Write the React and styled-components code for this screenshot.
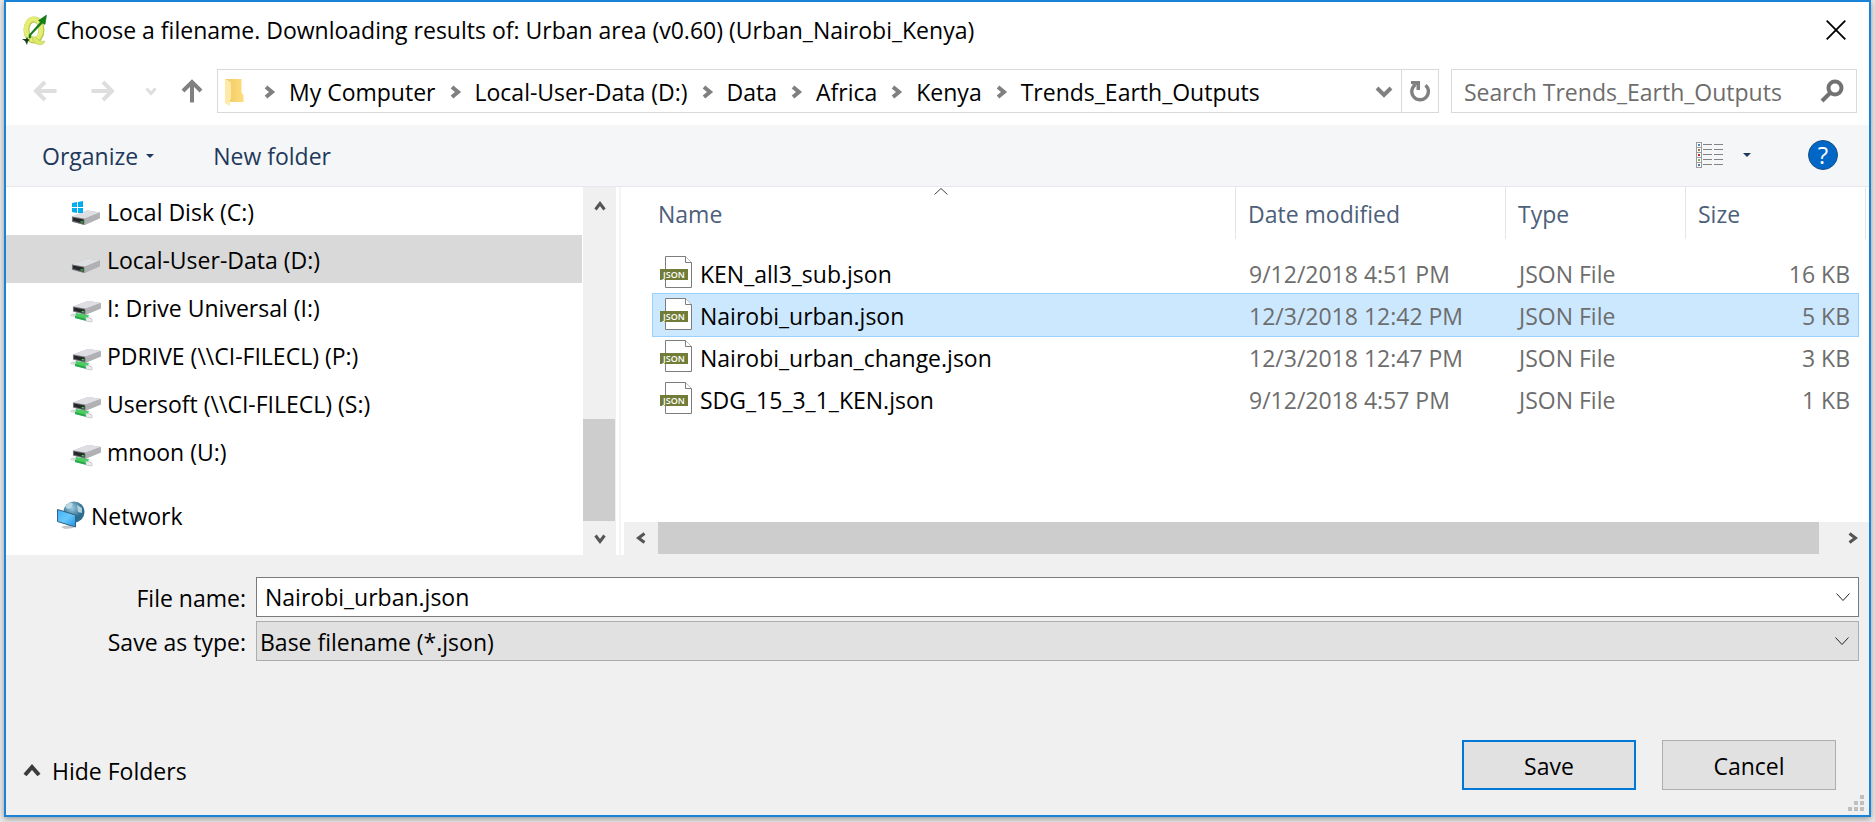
import React from 'react';
import styled, { createGlobalStyle, css } from 'styled-components';

const GlobalStyle = createGlobalStyle`
  *, *::before, *::after { box-sizing: border-box; }
  body {
    margin: 0;
    background: #e9e9e9;
    color: #000;
    font-family: "Open Sans", "Noto Sans", sans-serif;
    font-size: 23px;
    line-height: 32px;
  }
  button, input, select { font: inherit; color: inherit; }
  svg { display: block; flex: none; }
`;

const Dialog = styled.main`
  display: flex;
  flex-direction: column;
  min-width: 1200px;
  min-height: calc(100vh - 5px);
  margin: 0 4px 5px;
  border: 2px solid #1883d7;
  background: #fff;
  box-shadow: 0 2px 6px rgba(0, 0, 0, 0.35);
`;

const PlainButton = styled.button`
  display: flex;
  align-items: center;
  justify-content: center;
  padding: 0;
  border: 0;
  background: none;
  white-space: nowrap;
`;

const TitleBar = styled.header`
  display: flex;
  align-items: center;
  gap: 8px;
  height: 59px;
  padding: 0 23px 3px 15px;
`;

const Title = styled.h1`
  flex: 1;
  margin: 0;
  font-size: inherit;
  font-weight: 400;
  white-space: nowrap;
`;

const NavRow = styled.nav`
  display: flex;
  align-items: center;
  padding: 8px 12px 12px 27px;
`;

const HistoryButtons = styled.div`
  display: flex;
  gap: 23px;
  margin-right: 13px;
`;

const TravelButtons = styled.div`
  display: flex;
  gap: 34px;
  padding-right: 7px;
`;

const AddressBar = styled.div`
  display: flex;
  flex: 1;
  align-items: stretch;
  height: 44px;
  margin-right: 12px;
  border: 1px solid #d9d9d9;
`;

const Crumbs = styled.ol`
  display: flex;
  flex: 1;
  align-items: center;
  margin: 0;
  padding: 1px 0 0 7px;
  list-style: none;
`;

const Crumb = styled.li`
  display: flex;
  align-items: center;
  white-space: nowrap;

  svg { margin: 0 15px 0 14px; }
  &:first-of-type svg { margin-left: 20px; }
`;

const AddressButton = styled(PlainButton)`
  width: ${(p) => p.$width};
  border-left: ${(p) => (p.$divided ? '1px solid #d9d9d9' : '0')};
`;

const SearchBox = styled.label`
  display: flex;
  align-items: center;
  width: 406px;
  height: 44px;
  padding: 0 12px;
  border: 1px solid #d9d9d9;
`;

const SearchInput = styled.input`
  flex: 1;
  min-width: 0;
  padding: 2px 0 0;
  border: 0;
  outline: 0;
  background: none;

  &::placeholder { color: #6d6d6d; opacity: 1; }
`;

const Toolbar = styled.div`
  display: flex;
  align-items: center;
  height: 62px;
  padding: 0 31px 0 36px;
  border-bottom: 1px solid #e5e7ea;
  background: #f5f6f7;
  color: #1e395b;
`;

const ToolButton = styled(PlainButton)`
  gap: ${(p) => p.$gap || '10px'};
  margin-right: ${(p) => p.$after || '0'};
`;

const ToolbarEnd = styled.div`
  display: flex;
  align-items: center;
  gap: 57px;
  margin-left: auto;
  padding-bottom: 2px;
`;

const HelpButton = styled(PlainButton)`
  width: 30px;
  height: 30px;
  border: 1px solid #1b4f86;
  border-radius: 50%;
  background: #0067c6;
  color: #fff;
  font-size: 24px;
`;

const Browser = styled.section`
  display: flex;
  height: 368px;
`;

const Tree = styled.ul`
  width: 576px;
  margin: 0 1px 0 0;
  padding: 0;
  list-style: none;
`;

const TreeItem = styled.li`
  display: flex;
  align-items: center;
  gap: ${(p) => (p.$root ? '6px' : '4px')};
  height: 48px;
  margin-top: ${(p) => (p.$root ? '16px' : '0')};
  padding: 1px 0 0 ${(p) => (p.$root ? '51px' : '63px')};
  background: ${(p) => (p.$selected ? '#d9d9d9' : 'none')};
  white-space: nowrap;
`;

const VScroll = styled.div`
  display: flex;
  flex-direction: column;
  align-items: flex-start;
  width: 33px;
  background: #f0f0f0;
`;

const VTrack = styled.div`
  display: flex;
  flex: 1;
  align-items: flex-end;
  width: 32px;
`;

const VThumb = styled.div`
  width: 100%;
  height: 102px;
  background: #cdcdcd;
`;

const ScrollButton = styled(PlainButton)`
  width: ${(p) => (p.$vertical ? '33px' : '34px')};
  height: ${(p) => (p.$vertical ? '34px' : '32px')};
  padding-top: ${(p) => (p.$up ? '4px' : '0')};
  flex: none;
`;

const Splitter = styled.div`
  width: 2px;
  margin: 0 3px;
  background: #f5f5f5;
`;

const FilePane = styled.div`
  display: flex;
  flex: 1;
  flex-direction: column;
  min-width: 0;
  background: #fff;
`;

const TableArea = styled.div`
  flex: 1;
  padding: 0 3px 0 28px;
`;

const FileTable = styled.table`
  width: 100%;
  border-spacing: 0;
  table-layout: fixed;

  tbody::before {
    content: '';
    display: table-row;
    height: 13px;
  }
`;

const HeadCell = styled.th`
  position: relative;
  height: 52px;
  padding: 2px 0 0 ${(p) => (p.$first ? '6px' : '12px')};
  border-right: 1px solid #e5e5e5;
  color: #4c607a;
  font-weight: 400;
  text-align: left;
`;

const SortMark = styled.span`
  position: absolute;
  top: 1px;
  left: calc(50% - 10px);
`;

const Cell = styled.td`
  height: 42px;
  padding: 1px 0 0 13px;
  color: #6d6d6d;
  text-align: ${(p) => p.$align || 'left'};
  white-space: nowrap;

  &:first-child { padding-left: 8px; color: #000; }
  &:nth-child(4) { padding-right: 9px; }
`;

const FileRow = styled.tr`
  ${(p) => p.$selected && css`
    ${Cell}:not(:last-child) {
      background: #cce8ff;
      box-shadow: 0 -1px #99d1ff, 0 1px #99d1ff;
    }
    ${Cell}:first-child {
      box-shadow: 0 -1px #99d1ff, 0 1px #99d1ff, inset 1px 0 #99d1ff;
    }
    ${Cell}:nth-child(4) {
      box-shadow: 0 -1px #99d1ff, 0 1px #99d1ff, inset -1px 0 #99d1ff;
    }
  `}
`;

const FileName = styled.span`
  display: flex;
  align-items: center;
  gap: 8px;

  svg { margin-bottom: 4px; }
`;

const HScroll = styled.div`
  display: flex;
  height: 33px;
  background: #f0f0f0;
`;

const HTrack = styled.div`
  flex: 1;
  padding-right: 16px;
`;

const HThumb = styled.div`
  height: 32px;
  background: #cdcdcd;
`;

const Footer = styled.form`
  display: flex;
  flex: 1;
  flex-direction: column;
  background: #f0f0f0;
`;

const Fields = styled.div`
  display: grid;
  grid-template-columns: 240px 1fr;
  gap: 4px 10px;
  padding: 22px 10px 0 0;
`;

const FieldLabel = styled.label`
  padding-top: 5px;
  text-align: right;
`;

const Combo = styled.div`
  display: flex;
  position: relative;
  height: 40px;
  border: 1px solid ${(p) => (p.$filled ? '#adadad' : '#7a7a7a')};
  background: ${(p) => (p.$filled ? '#e1e1e1' : '#fff')};
`;

const NameInput = styled.input`
  flex: 1;
  min-width: 0;
  padding: 0 0 0 8px;
  border: 0;
  outline: 0;
  background: none;
`;

const TypeSelect = styled.select`
  flex: 1;
  padding: 2px 0 0 3px;
  border: 0;
  outline: 0;
  background: none;
  appearance: none;
`;

const ComboButton = styled(PlainButton)`
  width: 31px;
`;

const ComboMark = styled.span`
  position: absolute;
  top: 15px;
  right: 9px;
  pointer-events: none;
`;

const Actions = styled.div`
  display: flex;
  align-items: center;
  gap: 26px;
  margin-top: auto;
  padding: 0 33px 25px 17px;
`;

const HideButton = styled(PlainButton)`
  gap: 11px;
  margin-right: auto;
  padding-top: 12px;
`;

const PushButton = styled.button`
  width: 174px;
  height: 50px;
  padding: 2px 0 0;
  border: ${(p) => (p.$primary ? '2px solid #0078d7' : '1px solid #adadad')};
  background: #e1e1e1;
`;

const Grip = styled.span`
  position: absolute;
  right: 11px;
  bottom: 6px;
`;

const Frame = styled.div`
  position: relative;
`;

function Chevron({ dir = 'down', w = 18, h = 11, weight = 4, color = '#808080' }) {
  const i = weight / 2;
  const points = {
    down: `${i},${i} ${w / 2},${h - i} ${w - i},${i}`,
    up: `${i},${h - i} ${w / 2},${i} ${w - i},${h - i}`,
    right: `${i},${i} ${w - i},${h / 2} ${i},${h - i}`,
    left: `${w - i},${i} ${i},${h / 2} ${w - i},${h - i}`,
  };
  return (
    <svg width={w} height={h} viewBox={`0 0 ${w} ${h}`} overflow="visible">
      <polyline points={points[dir]} fill="none" stroke={color} strokeWidth={weight} />
    </svg>
  );
}

const Arrow = ({ turn = 0, color }) => (
  <svg width="24" height="24" viewBox="0 0 24 24">
    <path d="M23.500 12H3M12 3L3 12L12 21" transform={`rotate(${turn} 12 12)`} fill="none" stroke={color} strokeWidth="4" />
  </svg>
);

const Triangle = () => (
  <svg width="8" height="4" viewBox="0 0 8 4"><path d="M0 0H8L4 4Z" fill="#1e395b" /></svg>
);

const QgisLogo = () => (
  <svg width="27" height="32" viewBox="0 0 27 32">
    <ellipse cx="13" cy="16" rx="7.500" ry="10.500" fill="none" stroke="#b9c654" strokeWidth="6" />
    <ellipse cx="12.500" cy="15.500" rx="7.500" ry="10.500" fill="none" stroke="#e3ee72" strokeWidth="4.500" />
    <path d="M11 23C16 21 17 29 24 27C22 33 15 31 12 27Z" fill="#dce868" stroke="#b9c654" strokeWidth=".6" />
    <path d="M8 21L19.500 8L17.500 6.500L25.500 1L24 10.500L21.500 9L10 21L9.500 24H8Z" fill="#128312" stroke="#0a5d10" strokeWidth=".5" />
    <path d="M1 25L5 25L6 23L7 25L9 26L7 27L6 31L4 27Z" fill="#153d19" />
  </svg>
);

const FolderIcon = () => (
  <svg width="19" height="28" viewBox="0 0 19 28">
    <defs>
      <linearGradient id="folder" x1="0" x2="1"><stop stopColor="#efca63" /><stop offset="1" stopColor="#ffdc7c" /></linearGradient>
    </defs>
    <path d="M0 1H16.500V15L18.500 17V24H5V4Z" fill="url(#folder)" />
    <path d="M0 1L6 5V21L5 22V28L0 25Z" fill="#ffe9a6" />
  </svg>
);

const RefreshIcon = () => (
  <svg width="20" height="23" viewBox="0 0 20 23">
    <path d="M15.500 5.200A8.300 8.300 0 1 1 5.500 4.600" fill="none" stroke="#808080" strokeWidth="3.400" />
    <path d="M1 1H10V10H6.500V5L1 4Z" fill="#808080" />
  </svg>
);

const SearchIcon = () => (
  <svg width="24" height="24" viewBox="0 0 24 24">
    <circle cx="15" cy="9" r="6.500" fill="none" stroke="#727272" strokeWidth="4" />
    <path d="M10.500 13.500L2 22" stroke="#727272" strokeWidth="4" />
  </svg>
);

const CloseIcon = () => (
  <svg width="20" height="20" viewBox="0 0 20 20"><path d="M.7 .7L19.300 19.300M19.300 .7L.7 19.300" stroke="#000" strokeWidth="1.800" /></svg>
);

const ViewIcon = () => (
  <svg width="27" height="26" viewBox="0 0 27 26" shapeRendering="crispEdges">
    {['#4a7fb5', '#a06d4b', '#c8281e', '#77a94e', '#3f78b5'].map((fill, i) => (
      <g key={i} transform={`translate(0 ${i * 5})`}>
        <rect x=".5" y=".5" width="5" height="5" fill="#fff" stroke="#9a9a9a" />
        <rect x="2" y="2" width="2" height="2" fill={fill} />
        <path d="M7 2.500H16M18 2.500H27" stroke="#838383" />
      </g>
    ))}
  </svg>
);

const DriveBody = () => (
  <>
    <path d="M1 14L16 8Q17 7.600 19 8L30 10V16L14 23L1 19.500Z" fill="#b0b1b4" />
    <path d="M1 14L16 8Q17 7.600 19 8L30 10L14 16.500Z" fill="#dedfe2" />
    <path d="M14 16.500L30 10V16L14 23Z" fill="#b0b1b4" />
    <path d="M1 14L14 16.500V23L1 19.500Z" fill="#77797c" />
    <path d="M2 15L13 17.200V21.700L2 18.500Z" fill="#252729" />
    <path d="M10 18.700L12.500 19.200V20.700L10 20.200Z" fill="#3ccf45" />
  </>
);

function DriveIcon({ kind }) {
  if (kind === 'network') {
    return (
      <svg width="34" height="32" viewBox="0 -2 34 32">
        <path d="M2 20L7 19L10 21L22 24L23 28L17 27L6 23L1 22Z" fill="#d7dbd9" />
        <path d="M7 19L20 21L18 27L6 24Z" fill="#48cf64" />
        <path d="M6 22L18 25L18 27L6 24Z" fill="#2ca64c" />
        <path d="M17 23L23 25V28L17 27Z" fill="#eceeee" stroke="#b6baba" strokeWidth=".6" />
        <g transform="translate(3 0) scale(.96 .9)"><DriveBody /></g>
      </svg>
    );
  }
  return (
    <svg width="34" height="32" viewBox="0 -3 34 32">
      <g transform="translate(2 4) scale(.96)"><DriveBody /></g>
      {kind === 'system' && (
        <path d="M3 4L8 3V8H3ZM9 3L14 2V8H9ZM3 9H8V14L3 13ZM9 9H14V14H9Z" fill="#00adef" />
      )}
    </svg>
  );
}

const NetworkIcon = () => (
  <svg width="28" height="32" viewBox="0 0 28 32">
    <defs>
      <linearGradient id="screen" x1="0" y1="0" x2="1" y2="1"><stop stopColor="#3cb2f4" /><stop offset=".5" stopColor="#68c8fc" /><stop offset="1" stopColor="#1d91e4" /></linearGradient>
      <radialGradient id="globe" cx=".4" cy=".3"><stop stopColor="#9ccde0" /><stop offset="1" stopColor="#2e6c8e" /></radialGradient>
    </defs>
    <circle cx="17" cy="12" r="10.500" fill="url(#globe)" />
    <path d="M8 6L13 2L16 4L14 8L10 9ZM20 5L25 8V13L21 12Z" fill="#c9e4ec" opacity=".8" />
    <path d="M7 26L14 25L17 28L8 29L4 27Z" fill="#c2c6ca" />
    <path d="M.5 9.500L18.500 15V27L.5 21.500Z" fill="url(#screen)" stroke="#355f7d" />
  </svg>
);

const JsonIcon = () => (
  <svg width="32" height="32" viewBox="0 0 32 32">
    <path d="M5.500 .5H25.500L31.500 6.500V31.500H5.500Z" fill="#fff" stroke="#7d7d7d" />
    <path d="M25.500 .5V6.500H31.500" fill="#fff" stroke="#7d7d7d" />
    <rect y="13" width="28" height="11" fill="#707c37" />
    <text x="14" y="22" fill="#fff" fontSize="9" fontWeight="600" textAnchor="middle" fontFamily="Open Sans, sans-serif">JSON</text>
  </svg>
);

const GripIcon = () => (
  <svg width="16" height="16" viewBox="0 0 16 16">
    <path d="M12 0h4v4h-4zM6 6h4v4H6zM12 6h4v4h-4zM0 12h4v4H0zM6 12h4v4H6zM12 12h4v4h-4z" fill="#bfbfbf" />
  </svg>
);

const crumbs = ['My Computer', 'Local-User-Data (D:)', 'Data', 'Africa', 'Kenya', 'Trends_Earth_Outputs'];

const drives = [
  { label: 'Local Disk (C:)', kind: 'system' },
  { label: 'Local-User-Data (D:)', kind: 'local', selected: true },
  { label: 'I: Drive Universal (I:)', kind: 'network' },
  { label: 'PDRIVE (\\\\CI-FILECL) (P:)', kind: 'network' },
  { label: 'Usersoft (\\\\CI-FILECL) (S:)', kind: 'network' },
  { label: 'mnoon (U:)', kind: 'network' },
];

const files = [
  { name: 'KEN_all3_sub.json', date: '9/12/2018 4:51 PM', size: '16 KB' },
  { name: 'Nairobi_urban.json', date: '12/3/2018 12:42 PM', size: '5 KB', selected: true },
  { name: 'Nairobi_urban_change.json', date: '12/3/2018 12:47 PM', size: '3 KB' },
  { name: 'SDG_15_3_1_KEN.json', date: '9/12/2018 4:57 PM', size: '1 KB' },
];

export default function App() {
  return (
    <Frame>
      <GlobalStyle />
      <Dialog>
        <TitleBar>
          <QgisLogo />
          <Title>Choose a filename. Downloading results of: Urban area (v0.60) (Urban_Nairobi_Kenya)</Title>
          <PlainButton aria-label="Close"><CloseIcon /></PlainButton>
        </TitleBar>

        <NavRow>
          <HistoryButtons>
            <TravelButtons>
              <PlainButton aria-label="Back" disabled><Arrow color="#dedede" /></PlainButton>
              <PlainButton aria-label="Forward" disabled><Arrow color="#dedede" turn={180} /></PlainButton>
            </TravelButtons>
            <PlainButton aria-label="Recent locations"><Chevron w={12} h={8} weight={3} color="#dedede" /></PlainButton>
            <PlainButton aria-label="Up"><Arrow color="#808080" turn={90} /></PlainButton>
          </HistoryButtons>
          <AddressBar>
            <Crumbs>
              <FolderIcon />
              {crumbs.map((name) => (
                <Crumb key={name}><Chevron dir="right" w={10} h={14} />{name}</Crumb>
              ))}
            </Crumbs>
            <AddressButton $width="34px" aria-label="Previous locations"><Chevron /></AddressButton>
            <AddressButton $width="37px" $divided aria-label="Refresh"><RefreshIcon /></AddressButton>
          </AddressBar>
          <SearchBox>
            <SearchInput aria-label="Search" placeholder="Search Trends_Earth_Outputs" />
            <SearchIcon />
          </SearchBox>
        </NavRow>

        <Toolbar>
          <ToolButton $gap="8px" $after="59px">Organize <Triangle /></ToolButton>
          <ToolButton>New folder</ToolButton>
          <ToolbarEnd>
            <ToolButton $gap="20px" aria-label="Change view"><ViewIcon /><Triangle /></ToolButton>
            <HelpButton aria-label="Help">?</HelpButton>
          </ToolbarEnd>
        </Toolbar>

        <Browser>
          <Tree>
            {drives.map((d) => (
              <TreeItem key={d.label} $selected={d.selected}><DriveIcon kind={d.kind} />{d.label}</TreeItem>
            ))}
            <TreeItem $root><NetworkIcon />Network</TreeItem>
          </Tree>
          <VScroll>
            <ScrollButton $vertical $up aria-label="Scroll up"><Chevron dir="up" w={12} h={9} weight={3} color="#555" /></ScrollButton>
            <VTrack><VThumb /></VTrack>
            <ScrollButton $vertical aria-label="Scroll down"><Chevron w={12} h={9} weight={3} color="#555" /></ScrollButton>
          </VScroll>
          <Splitter />
          <FilePane>
            <TableArea>
              <FileTable>
                <colgroup>
                  <col />
                  <col width="270" />
                  <col width="180" />
                  <col width="173" />
                  <col width="7" />
                </colgroup>
                <thead>
                  <tr>
                    <HeadCell $first>
                      Name
                      <SortMark><Chevron dir="up" w={14} h={7} weight={1} color="#444" /></SortMark>
                    </HeadCell>
                    <HeadCell>Date modified</HeadCell>
                    <HeadCell>Type</HeadCell>
                    <HeadCell colSpan={2}>Size</HeadCell>
                  </tr>
                </thead>
                <tbody>
                  {files.map((f) => (
                    <FileRow key={f.name} $selected={f.selected}>
                      <Cell><FileName><JsonIcon />{f.name}</FileName></Cell>
                      <Cell>{f.date}</Cell>
                      <Cell>JSON File</Cell>
                      <Cell $align="right">{f.size}</Cell>
                      <Cell />
                    </FileRow>
                  ))}
                </tbody>
              </FileTable>
            </TableArea>
            <HScroll>
              <ScrollButton aria-label="Scroll left"><Chevron dir="left" w={9} h={12} weight={3} color="#555" /></ScrollButton>
              <HTrack><HThumb /></HTrack>
              <ScrollButton aria-label="Scroll right"><Chevron dir="right" w={9} h={12} weight={3} color="#555" /></ScrollButton>
            </HScroll>
          </FilePane>
        </Browser>

        <Footer onSubmit={(e) => e.preventDefault()}>
          <Fields>
            <FieldLabel htmlFor="file-name">File name:</FieldLabel>
            <Combo>
              <NameInput id="file-name" defaultValue="Nairobi_urban.json" />
              <ComboButton type="button" aria-label="Recent file names"><Chevron w={14} h={8} weight={1} color="#222" /></ComboButton>
            </Combo>
            <FieldLabel htmlFor="file-type">Save as type:</FieldLabel>
            <Combo $filled>
              <TypeSelect id="file-type"><option>Base filename (*.json)</option></TypeSelect>
              <ComboMark><Chevron w={14} h={8} weight={1} color="#222" /></ComboMark>
            </Combo>
          </Fields>
          <Actions>
            <HideButton type="button"><Chevron dir="up" w={18} h={12} color="#3c3c3c" />Hide Folders</HideButton>
            <PushButton $primary type="submit">Save</PushButton>
            <PushButton type="button">Cancel</PushButton>
          </Actions>
        </Footer>
      </Dialog>
      <Grip><GripIcon /></Grip>
    </Frame>
  );
}
